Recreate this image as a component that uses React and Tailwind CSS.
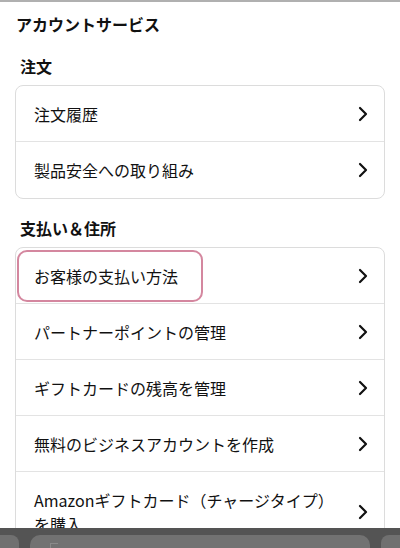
import React from "react";

const font = { fontFamily: '"Noto Sans CJK JP", "Noto Sans", sans-serif' };

function Chevron() {
  return (
    <svg width="10" height="16" viewBox="0 0 10 16" className="shrink-0">
      <path d="M2 2 L8 8 L2 14" fill="none" stroke="#111" strokeWidth="2.2" strokeLinecap="round" strokeLinejoin="round" />
    </svg>
  );
}

function Row({ label, highlight, tall }) {
  return (
    <div
      className={
        "relative flex items-center justify-between pl-[18px] pr-[16px] " +
        (tall ? "py-4" : "h-14")
      }
    >
      <span className="flex-1 mr-[28px] text-[16px] leading-6 text-[#111]">{label}</span>
      <Chevron />
      {highlight && (
        <div className="absolute left-[1px] top-[2px] w-[186px] h-[52px] border-2 border-[#d4879f] rounded-[10px]" />
      )}
    </div>
  );
}

function Card({ children }) {
  return (
    <div className="mx-[15px] mt-[7px] border border-[#dcdcdc] rounded-lg divide-y divide-[#e3e3e3] bg-white">
      {children}
    </div>
  );
}

export default function App() {
  return (
    <div className="relative h-[548px] overflow-hidden bg-white border-t-2 border-[#b0b0b0]" style={font}>
      <h1 className="pt-[10px] px-4 text-[16px] leading-6 font-bold text-[#111]">アカウントサービス</h1>

      <h2 className="mt-[18px] px-5 text-[16px] leading-6 font-bold text-[#111]">注文</h2>
      <Card>
        <Row label="注文履歴" />
        <Row label="製品安全への取り組み" />
      </Card>

      <h2 className="mt-[17px] px-5 text-[16px] leading-6 font-bold text-[#111]">支払い＆住所</h2>
      <Card>
        <Row label="お客様の支払い方法" highlight />
        <Row label="パートナーポイントの管理" />
        <Row label="ギフトカードの残高を管理" />
        <Row label="無料のビジネスアカウントを作成" />
        <Row label={"Amazonギフトカード（チャージタイプ）を購入"} tall />
      </Card>

      <div className="absolute left-0 right-0 top-[526px] h-[22px] bg-[#545454] flex items-end gap-[11px]">
        <div className="w-[19px] h-[15px] bg-[#707070] rounded-tr-[8px]" />
        <div className="flex-1 h-[15px] bg-[#727272] rounded-t-[10px] relative">
          <div className="absolute left-[20px] top-[8px] w-[8px] h-[7px] border-t border-l border-[#8a8a8a]" />
        </div>
        <div className="w-[19px] h-[15px] bg-[#707070] rounded-tl-[8px]" />
      </div>
    </div>
  );
}
